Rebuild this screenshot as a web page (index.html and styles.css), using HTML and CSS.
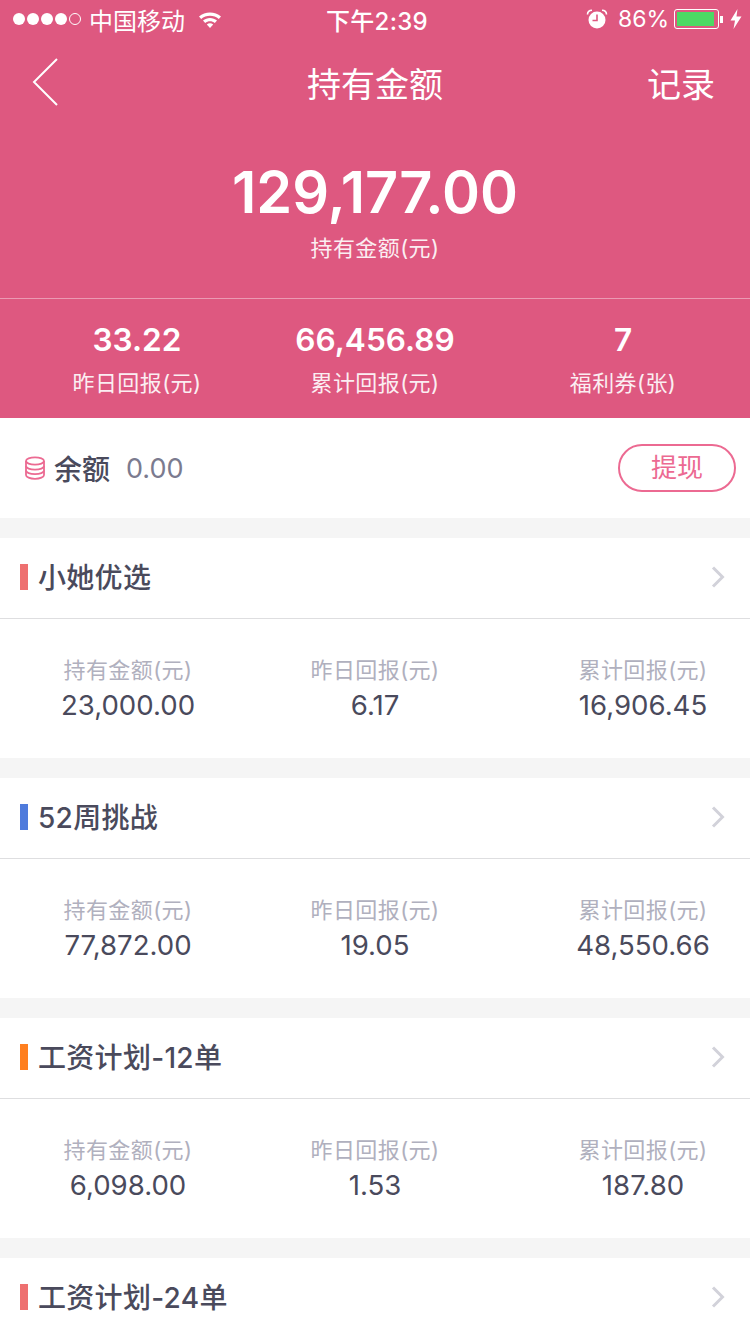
FILE: index.html
```html
<!DOCTYPE html>
<html lang="zh-CN">
<head>
    <meta charset="utf-8">
    <title>持有金额</title>
    <link rel="stylesheet" href="styles.css">
</head>
<body>
    <div class="hero">
        <div class="status-bar">
            <div class="status-left">
                <span class="signal"><i></i><i></i><i></i><i></i><i class="off"></i></span>
                <span class="carrier">中国移动</span>
                <svg class="wifi" width="24" height="18" viewBox="0 0 24 18">
                    <path d="M1 6.5C7 1 17 1 23 6.5L20.8 8.9C16 4.6 8 4.6 3.2 8.9Z" fill="#fff"/>
                    <path d="M5 10.6C9 7.2 15 7.2 19 10.6L16.8 13C14 10.7 10 10.7 7.2 13Z" fill="#fff"/>
                    <path d="M8.8 14.4C10.8 13 13.2 13 15.2 14.4L12 18Z" fill="#fff"/>
                </svg>
            </div>
            <div class="status-time">下午2:39</div>
            <div class="status-right">
                <svg class="alarm" width="22" height="20" viewBox="0 0 22 20">
                    <circle cx="11" cy="11" r="8.5" fill="#fff"/>
                    <path d="M11 5.5V11.5H6.5" fill="none" stroke="#de5880" stroke-width="1.6"/>
                    <path d="M1.5 5.5C1.5 2.8 3.2 1.2 6 1.2M20.5 5.5C20.5 2.8 18.8 1.2 16 1.2" fill="none" stroke="#fff" stroke-width="1.6"/>
                </svg>
                <span class="battery-pct">86%</span>
                <span class="battery"><span class="battery-fill"></span></span>
                <span class="battery-tip"></span>
                <svg class="bolt" width="12" height="20" viewBox="0 0 12 20">
                    <path d="M7.5 0L0.5 11.5H5L3.5 20L11.5 7.5H6.5Z" fill="#fff"/>
                </svg>
            </div>
        </div>

        <div class="nav-bar">
            <svg class="back" width="28" height="50" viewBox="0 0 28 50">
                <path d="M25 2L2 25L25 48" fill="none" stroke="#fff" stroke-width="2"/>
            </svg>
            <div class="nav-title">持有金额</div>
            <div class="nav-action">记录</div>
        </div>

        <div class="total">
            <div class="total-num">129,177.00</div>
            <div class="total-label">持有金额(元)</div>
        </div>

        <div class="summary">
            <div class="summary-item">
                <div class="summary-num">33.22</div>
                <div class="summary-label">昨日回报(元)</div>
            </div>
            <div class="summary-item">
                <div class="summary-num">66,456.89</div>
                <div class="summary-label">累计回报(元)</div>
            </div>
            <div class="summary-item">
                <div class="summary-num">7</div>
                <div class="summary-label">福利券(张)</div>
            </div>
        </div>
    </div>

    <div class="balance">
        <svg class="coins" width="22" height="24" viewBox="0 0 22 24" fill="none" stroke="#ec6a92" stroke-width="1.8">
            <ellipse cx="11" cy="5" rx="9" ry="3.6"/>
            <path d="M2 5V19C2 21 6 22.8 11 22.8S20 21 20 19V5"/>
            <path d="M2 10C2 12 6 13.6 11 13.6S20 12 20 10"/>
            <path d="M2 14.6C2 16.6 6 18.2 11 18.2S20 16.6 20 14.6"/>
        </svg>
        <span class="balance-label">余额</span>
        <span class="balance-num">0.00</span>
        <div class="withdraw">提现</div>
    </div>

    <div class="card">
        <div class="card-head">
            <span class="mark mark-red"></span>
            <span class="card-title">小她优选</span>
            <svg class="arrow" width="14" height="22" viewBox="0 0 14 22"><path d="M2 1.5L11.5 11L2 20.5" fill="none" stroke="#d2d2da" stroke-width="3"/></svg>
        </div>
        <div class="card-body">
            <div class="col"><div class="col-label">持有金额(元)</div><div class="col-num">23,000.00</div></div>
            <div class="col"><div class="col-label">昨日回报(元)</div><div class="col-num">6.17</div></div>
            <div class="col"><div class="col-label">累计回报(元)</div><div class="col-num">16,906.45</div></div>
        </div>
    </div>

    <div class="card">
        <div class="card-head">
            <span class="mark mark-blue"></span>
            <span class="card-title">52周挑战</span>
            <svg class="arrow" width="14" height="22" viewBox="0 0 14 22"><path d="M2 1.5L11.5 11L2 20.5" fill="none" stroke="#d2d2da" stroke-width="3"/></svg>
        </div>
        <div class="card-body">
            <div class="col"><div class="col-label">持有金额(元)</div><div class="col-num">77,872.00</div></div>
            <div class="col"><div class="col-label">昨日回报(元)</div><div class="col-num">19.05</div></div>
            <div class="col"><div class="col-label">累计回报(元)</div><div class="col-num">48,550.66</div></div>
        </div>
    </div>

    <div class="card">
        <div class="card-head">
            <span class="mark mark-orange"></span>
            <span class="card-title">工资计划-12单</span>
            <svg class="arrow" width="14" height="22" viewBox="0 0 14 22"><path d="M2 1.5L11.5 11L2 20.5" fill="none" stroke="#d2d2da" stroke-width="3"/></svg>
        </div>
        <div class="card-body">
            <div class="col"><div class="col-label">持有金额(元)</div><div class="col-num">6,098.00</div></div>
            <div class="col"><div class="col-label">昨日回报(元)</div><div class="col-num">1.53</div></div>
            <div class="col"><div class="col-label">累计回报(元)</div><div class="col-num">187.80</div></div>
        </div>
    </div>

    <div class="card">
        <div class="card-head">
            <span class="mark mark-red"></span>
            <span class="card-title">工资计划-24单</span>
            <svg class="arrow" width="14" height="22" viewBox="0 0 14 22"><path d="M2 1.5L11.5 11L2 20.5" fill="none" stroke="#d2d2da" stroke-width="3"/></svg>
        </div>
    </div>
</body>
</html>
```

FILE: styles.css
```css
* {
    box-sizing: border-box;
    margin: 0;
    padding: 0;
}
html, body {
    height: 1334px;
    overflow: hidden;
}
body {
    background-color: #f5f5f5;
    font-family: Inter, "Noto Sans CJK SC", sans-serif;
    color: #4a4a5c;
}
.hero {
    height: 418px;
    background-color: #de5880;
    color: #fff;
}
.status-bar {
    height: 40px;
    display: flex;
    align-items: center;
    justify-content: space-between;
    padding: 0 8px 2px 13px;
    font-size: 24px;
    position: relative;
}
.status-left,
.status-right {
    display: flex;
    align-items: center;
}
.signal {
    display: flex;
    gap: 2px;
    margin-right: 8px;
}
.signal i {
    width: 12px;
    height: 12px;
    border-radius: 50%;
    background-color: #fff;
}
.signal i.off {
    background: none;
    border: 1px solid #fff;
}
.wifi {
    margin-left: 13px;
}
.status-time {
    position: absolute;
    left: 4px;
    right: 0;
    text-align: center;
    font-weight: 500;
    letter-spacing: 0.3px;
}
.battery-pct {
    font-size: 23px;
    margin: 0 5px 0 10px;
}
.battery {
    width: 45px;
    height: 20px;
    border: 1px solid #fff;
    border-radius: 3px;
    padding: 2px;
    display: flex;
}
.battery-fill {
    width: 37px;
    background-color: #4cd964;
}
.battery-tip {
    width: 3px;
    height: 7px;
    margin: 0 7px 0 1px;
    background-color: #fff;
}
.nav-bar {
    height: 88px;
    display: flex;
    align-items: center;
    justify-content: space-between;
    padding: 0 35px 4px 32px;
    position: relative;
}
.nav-title {
    position: absolute;
    left: 0;
    right: 0;
    text-align: center;
    font-size: 34px;
    pointer-events: none;
}
.nav-action {
    font-size: 34px;
}
.total {
    height: 171px;
    padding-top: 28px;
    text-align: center;
    border-bottom: 1px solid rgba(255, 255, 255, 0.4);
}
.total-num {
    font-size: 57.6px;
    font-weight: 600;
    line-height: 72px;
}
.total-label {
    font-size: 22px;
    line-height: 30px;
    margin-top: 5px;
    letter-spacing: 0.4px;
    opacity: 0.9;
}
.summary {
    display: flex;
    padding-top: 22px;
}
.summary-item {
    text-align: center;
}
.summary-item:first-child {
    width: 274px;
}
.summary-item:nth-child(2) {
    width: 202px;
}
.summary-item:last-child {
    width: 274px;
    padding-left: 20px;
}
.summary-num {
    font-size: 31.6px;
    font-weight: 600;
    line-height: 38px;
}
.summary-label {
    font-size: 22px;
    line-height: 30px;
    margin-top: 9px;
    letter-spacing: 0.4px;
    opacity: 0.9;
}
.balance {
    height: 100px;
    background-color: #fff;
    display: flex;
    align-items: center;
    padding: 0 14px 0 24px;
    margin-bottom: 20px;
}
.balance-label {
    font-size: 28px;
    font-weight: 500;
    margin: 0 0 0 8px;
}
.balance-num {
    font-size: 27px;
    color: #7b7b8f;
    margin: 0 0 0 16px;
}
.withdraw {
    margin-left: auto;
    width: 118px;
    height: 48px;
    border: 2px solid #ec6a92;
    border-radius: 24px;
    color: #ec6a92;
    font-size: 26px;
    line-height: 44px;
    text-align: center;
}
.card {
    background-color: #fff;
    margin-bottom: 20px;
}
.card-head {
    height: 80px;
    display: flex;
    align-items: center;
    padding: 0 25px 2px 20px;
}
.card-title {
    font-size: 28px;
    line-height: 36px;
    margin: 2px 0 0 10px;
    font-weight: 500;
    letter-spacing: 0.3px;
}
.mark {
    width: 8px;
    height: 26px;
}
.mark-red {
    background-color: #ee7070;
}
.mark-blue {
    background-color: #4f7bdc;
}
.mark-orange {
    background-color: #ff7f1f;
}
.arrow {
    margin-left: auto;
}
.card-body {
    height: 140px;
    border-top: 1px solid #dedee0;
    display: flex;
    padding-top: 36px;
}
.col {
    text-align: center;
}
.col:nth-child(1) {
    width: 256px;
}
.col:nth-child(2) {
    width: 238px;
}
.col:nth-child(3) {
    width: 256px;
    padding-left: 42px;
}
.col-label {
    font-size: 22px;
    line-height: 30px;
    letter-spacing: 0.4px;
    color: #b0b0be;
}
.col-num {
    font-size: 27.6px;
    line-height: 36px;
    margin-top: 2px;
    color: #4a4a5c;
}
```
